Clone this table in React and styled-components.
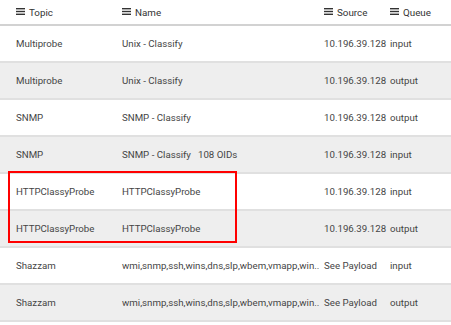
import React from "react";
import styled, { createGlobalStyle } from "styled-components";

const rows = [
  { topic: "Multiprobe", name: "Unix - Classify", source: "10.196.39.128", queue: "input" },
  { topic: "Multiprobe", name: "Unix - Classify", source: "10.196.39.128", queue: "output" },
  { topic: "SNMP", name: "SNMP - Classify", source: "10.196.39.128", queue: "output" },
  { topic: "SNMP", name: "SNMP - Classify", extra: "108 OIDs", source: "10.196.39.128", queue: "input" },
  { topic: "HTTPClassyProbe", name: "HTTPClassyProbe", source: "10.196.39.128", queue: "input" },
  { topic: "HTTPClassyProbe", name: "HTTPClassyProbe", source: "10.196.39.128", queue: "output" },
  { topic: "Shazzam", name: "wmi,snmp,ssh,wins,dns,slp,wbem,vmapp,win..", source: "See Payload", queue: "input" },
  { topic: "Shazzam", name: "wmi,snmp,ssh,wins,dns,slp,wbem,vmapp,win..", source: "See Payload", queue: "output" },
];

const columns = ["Topic", "Name", "Source", "Queue"];

export default function App() {
  return (
    <>
      <GlobalStyle />
      <Table>
        <HeaderRow>
          {columns.map((col) => (
            <HeaderCell key={col}>
              <MenuIcon />
              {col}
            </HeaderCell>
          ))}
        </HeaderRow>
        {rows.map((row, i) => (
          <Row key={i} $striped={i % 2 === 1}>
            <Cell>{row.topic}</Cell>
            <Cell>
              {row.name}
              {row.extra && <Extra>{row.extra}</Extra>}
            </Cell>
            <Cell>{row.source}</Cell>
            <Cell>{row.queue}</Cell>
          </Row>
        ))}
        <Highlight />
      </Table>
    </>
  );
}

function MenuIcon() {
  return (
    <Icon width="9" height="7" viewBox="0 0 9 7">
      <rect x="0" y="0" width="9" height="1.4" fill="currentColor" />
      <rect x="0" y="2.8" width="9" height="1.4" fill="currentColor" />
      <rect x="0" y="5.6" width="9" height="1.4" fill="currentColor" />
    </Icon>
  );
}

const GlobalStyle = createGlobalStyle`
  body {
    margin: 0;
    background: #ffffff;
    font-family: "Roboto", "Liberation Sans", sans-serif;
    color: #454545;
  }
`;

const Table = styled.div`
  position: relative;
  width: 451px;
`;

const grid = `
  display: grid;
  grid-template-columns: 106px 202px 66px minmax(0, 1fr);
  padding-left: 16px;
  align-items: center;
`;

const HeaderRow = styled.div`
  ${grid}
  height: 24px;
  border-bottom: 2px solid #d2d2d2;
`;

const HeaderCell = styled.div`
  display: flex;
  align-items: center;
  gap: 4px;
  font-size: 9.8px;
  color: #333333;
`;

const Icon = styled.svg`
  flex: none;
  margin-top: -1px;
`;

const Row = styled.div`
  ${grid}
  height: 35px;
  border-bottom: 2px solid #e0e0e0;
  background: ${(p) => (p.$striped ? "#eeeeee" : "#ffffff")};
`;

const Cell = styled.div`
  font-size: 9.7px;
  white-space: nowrap;
  min-width: 0;
`;

const Extra = styled.span`
  margin-left: 7px;
`;

const Highlight = styled.div`
  position: absolute;
  left: 8px;
  top: 171px;
  width: 229px;
  height: 72px;
  box-sizing: border-box;
  border: 2px solid #ff0000;
  pointer-events: none;
`;
